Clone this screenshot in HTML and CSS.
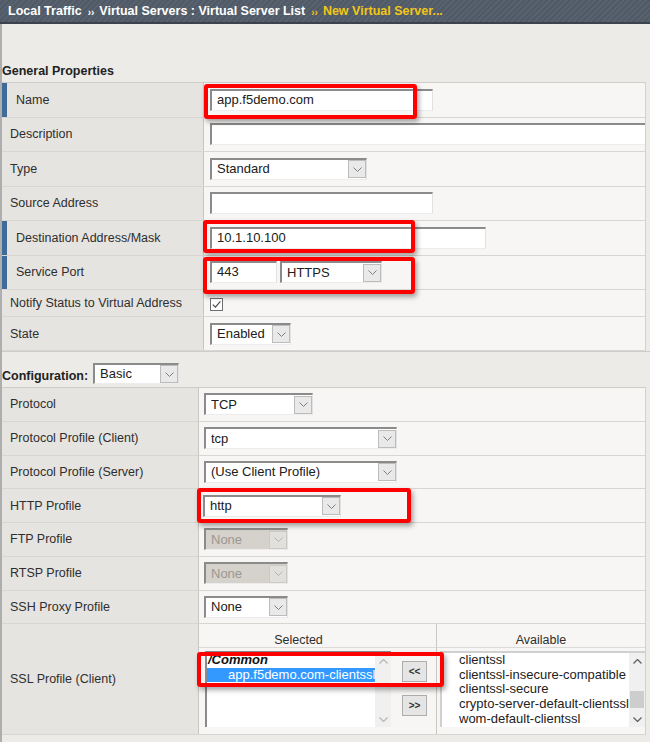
FILE: index.html
```html
<!DOCTYPE html>
<html lang="en">
<head>
    <meta charset="UTF-8">
    <title>New Virtual Server</title>
    <link rel="stylesheet" href="styles.css">
</head>
<body>
    <header class="crumbs">
        <span>Local Traffic</span>
        <span class="sep">››</span>
        <span>Virtual Servers : Virtual Server List</span>
        <span class="sep here">››</span>
        <span class="here">New Virtual Server...</span>
    </header>

    <main class="page">
        <h3 class="section-title">General Properties</h3>
        <div class="props general">
            <div class="row required">
                <div class="label">Name</div>
                <div class="value"><div class="text w-name">app.f5demo.com</div></div>
            </div>
            <div class="row">
                <div class="label">Description</div>
                <div class="value"><div class="text w-desc"></div></div>
            </div>
            <div class="row">
                <div class="label">Type</div>
                <div class="value">
                    <div class="select w-type"><span class="sel-text">Standard</span><span class="arrow"><svg class="chev" viewBox="0 0 9 5"><polyline points="0.5,0.5 4.5,4.5 8.5,0.5"/></svg></span></div>
                </div>
            </div>
            <div class="row">
                <div class="label">Source Address</div>
                <div class="value"><div class="text w-name"></div></div>
            </div>
            <div class="row required">
                <div class="label">Destination Address/Mask</div>
                <div class="value"><div class="text w-dest">10.1.10.100</div></div>
            </div>
            <div class="row required">
                <div class="label">Service Port</div>
                <div class="value port">
                    <div class="text w-port">443</div>
                    <div class="select w-https"><span class="sel-text">HTTPS</span><span class="arrow"><svg class="chev" viewBox="0 0 9 5"><polyline points="0.5,0.5 4.5,4.5 8.5,0.5"/></svg></span></div>
                </div>
            </div>
            <div class="row short">
                <div class="label">Notify Status to Virtual Address</div>
                <div class="value">
                    <span class="checkbox"><svg viewBox="0 0 11 11"><polyline points="1.8,5.6 4.4,8.2 9.4,2.4"/></svg></span>
                </div>
            </div>
            <div class="row state">
                <div class="label">State</div>
                <div class="value">
                    <div class="select w-state"><span class="sel-text">Enabled</span><span class="arrow"><svg class="chev" viewBox="0 0 9 5"><polyline points="0.5,0.5 4.5,4.5 8.5,0.5"/></svg></span></div>
                </div>
            </div>
        </div>

        <div class="config-head">
            <span class="config-title">Configuration:</span>
            <div class="select w-basic"><span class="sel-text">Basic</span><span class="arrow"><svg class="chev" viewBox="0 0 9 5"><polyline points="0.5,0.5 4.5,4.5 8.5,0.5"/></svg></span></div>
        </div>
        <div class="props config">
            <div class="row">
                <div class="label">Protocol</div>
                <div class="value">
                    <div class="select w-tcp"><span class="sel-text">TCP</span><span class="arrow"><svg class="chev" viewBox="0 0 9 5"><polyline points="0.5,0.5 4.5,4.5 8.5,0.5"/></svg></span></div>
                </div>
            </div>
            <div class="row">
                <div class="label">Protocol Profile (Client)</div>
                <div class="value">
                    <div class="select w-wide"><span class="sel-text">tcp</span><span class="arrow"><svg class="chev" viewBox="0 0 9 5"><polyline points="0.5,0.5 4.5,4.5 8.5,0.5"/></svg></span></div>
                </div>
            </div>
            <div class="row">
                <div class="label">Protocol Profile (Server)</div>
                <div class="value">
                    <div class="select w-wide"><span class="sel-text">(Use Client Profile)</span><span class="arrow"><svg class="chev" viewBox="0 0 9 5"><polyline points="0.5,0.5 4.5,4.5 8.5,0.5"/></svg></span></div>
                </div>
            </div>
            <div class="row">
                <div class="label">HTTP Profile</div>
                <div class="value">
                    <div class="select w-http"><span class="sel-text">http</span><span class="arrow"><svg class="chev" viewBox="0 0 9 5"><polyline points="0.5,0.5 4.5,4.5 8.5,0.5"/></svg></span></div>
                </div>
            </div>
            <div class="row">
                <div class="label">FTP Profile</div>
                <div class="value">
                    <div class="select w-none disabled"><span class="sel-text">None</span><span class="arrow"><svg class="chev" viewBox="0 0 9 5"><polyline points="0.5,0.5 4.5,4.5 8.5,0.5"/></svg></span></div>
                </div>
            </div>
            <div class="row">
                <div class="label">RTSP Profile</div>
                <div class="value">
                    <div class="select w-none disabled"><span class="sel-text">None</span><span class="arrow"><svg class="chev" viewBox="0 0 9 5"><polyline points="0.5,0.5 4.5,4.5 8.5,0.5"/></svg></span></div>
                </div>
            </div>
            <div class="row">
                <div class="label">SSH Proxy Profile</div>
                <div class="value">
                    <div class="select w-none"><span class="sel-text">None</span><span class="arrow"><svg class="chev" viewBox="0 0 9 5"><polyline points="0.5,0.5 4.5,4.5 8.5,0.5"/></svg></span></div>
                </div>
            </div>
            <div class="row ssl">
                <div class="label">SSL Profile (Client)</div>
                <div class="value swap">
                    <div class="swap-head">Selected</div>
                    <div class="swap-head"></div>
                    <div class="swap-head divided">Available</div>

                    <div class="swap-col">
                        <div class="listbox w-selected">
                            <div class="items">
                                <div class="group">/Common</div>
                                <div class="item picked">app.f5demo.com-clientssl</div>
                            </div>
                            <div class="scrollbar faint">
                                <span class="sb-btn"><svg viewBox="0 0 9 5"><polyline points="0.5,4.5 4.5,0.5 8.5,4.5"/></svg></span>
                                <span class="sb-track"></span>
                                <span class="sb-btn"><svg viewBox="0 0 9 5"><polyline points="0.5,0.5 4.5,4.5 8.5,0.5"/></svg></span>
                            </div>
                        </div>
                    </div>
                    <div class="swap-buttons">
                        <span class="mini-btn">&lt;&lt;</span>
                        <span class="mini-btn">&gt;&gt;</span>
                    </div>
                    <div class="swap-col divided">
                        <div class="listbox w-available">
                            <div class="items">
                                <div class="item">clientssl</div>
                                <div class="item">clientssl-insecure-compatible</div>
                                <div class="item">clientssl-secure</div>
                                <div class="item">crypto-server-default-clientssl</div>
                                <div class="item">wom-default-clientssl</div>
                            </div>
                            <div class="scrollbar">
                                <span class="sb-btn"><svg viewBox="0 0 9 5"><polyline points="0.5,4.5 4.5,0.5 8.5,4.5"/></svg></span>
                                <span class="sb-track"><span class="sb-thumb"></span></span>
                                <span class="sb-btn"><svg viewBox="0 0 9 5"><polyline points="0.5,0.5 4.5,4.5 8.5,0.5"/></svg></span>
                            </div>
                        </div>
                    </div>
                </div>
            </div>
        </div>
    </main>

    <!-- callout frames drawn over the form -->
    <div class="mark mark-name"></div>
    <div class="mark mark-dest"></div>
    <div class="mark mark-port"></div>
    <div class="mark mark-http"></div>
    <div class="mark mark-ssl"></div>
</body>
</html>
```

FILE: styles.css
```css
* {
    margin: 0;
    padding: 0;
    box-sizing: border-box;
}

body {
    position: relative;
    width: 650px;
    height: 742px;
    overflow: hidden;
    background: #ecebe7;
    font-family: 'Liberation Sans', Arial, sans-serif;
    font-size: 12.5px;
    color: #2e2e2e;
}

/* Breadcrumb bar */
.crumbs {
    height: 24px;
    display: flex;
    align-items: center;
    padding-left: 8px;
    background: repeating-linear-gradient(135deg, #58626e 0 2px, #505a66 2px 4px);
    border-bottom: 2px solid #3c434c;
    color: #fff;
    font-weight: bold;
    white-space: nowrap;
}

.crumbs .sep {
    font-size: 10px;
    margin: 2px 5px 0 6px;
}

.crumbs .here {
    color: #f2c618;
}

/* Page body */
.page {
    border-left: 2px solid #aeaeae;
    height: 718px;
}

.section-title {
    height: 58px;
    display: flex;
    align-items: flex-end;
    padding-bottom: 4px;
    font-size: 12.5px;
    font-weight: bold;
    color: #222;
}

.props {
    width: 644px;
    border-top: 1px solid #cfcdc9;
    border-right: 1px solid #d3d1cd;
}

.row {
    display: grid;
    border-bottom: 1px solid #d8d6d2;
}

.general .row {
    grid-template-columns: 202px 1fr;
    height: 34.5px;
}

.general .row.short {
    height: 27px;
}

.general .row.state {
    height: 34px;
}

.config .row {
    grid-template-columns: 197px 1fr;
    height: 33.75px;
}

.config .row.ssl {
    height: 111px;
}

.label {
    display: flex;
    align-items: center;
    padding-left: 8px;
    background: #e6e4e0;
    border-right: 1px solid #c9c7c3;
    white-space: nowrap;
}

.required .label {
    border-left: 5px solid #3e6b9a;
    padding-left: 9px;
}

.value {
    display: flex;
    align-items: center;
    padding-left: 6px;
    background: #f7f6f4;
    overflow: hidden;
}

.config .value {
    padding-left: 5px;
}

.value.port {
    gap: 3px;
}

/* Text boxes and drop-downs */
.text,
.select {
    flex-shrink: 0;
    height: 22px;
    background: #fff;
    border-top: 2px solid #8b8b8b;
    border-left: 2px solid #8b8b8b;
    border-right: 1px solid #e2e2e2;
    border-bottom: 1px solid #ececec;
    font-size: 13px;
    color: #202020;
    white-space: nowrap;
}

.text {
    line-height: 18px;
    padding-left: 5px;
}

.select {
    display: flex;
    align-items: center;
}

.sel-text {
    flex: 1;
    padding-left: 5px;
    line-height: 18px;
    overflow: hidden;
}

.arrow {
    width: 18px;
    height: 18px;
    display: flex;
    align-items: center;
    justify-content: center;
    background: #e9e9e9;
    border: 1px solid #bcbcbc;
}

.chev {
    width: 9px;
    height: 5px;
    fill: none;
    stroke: #7d7d7d;
    stroke-width: 1;
}

.select.disabled {
    background: #d5d1cb;
    color: #9b9893;
}

.select.disabled .arrow {
    background: #e2e0dc;
    border-color: #cbc9c5;
}

.select.disabled .chev {
    stroke: #b5b3af;
}

.w-name { width: 223px; }
.w-desc { width: 440px; }
.w-dest { width: 276px; }
.w-port { width: 67px; }
.w-https { width: 102px; }
.w-type { width: 157px; }
.w-state { width: 81px; }
.w-basic { width: 86px; height: 21px; }
.w-tcp { width: 109px; }
.w-wide { width: 193px; }
.w-http { width: 138px; margin-left: -1px; }
.w-none { width: 84px; }

.checkbox {
    width: 13px;
    height: 13px;
    margin-top: 2px;
    background: #fff;
    border: 1px solid #6e6e6e;
    display: flex;
}

.checkbox svg {
    width: 11px;
    height: 11px;
    fill: none;
    stroke: #4a4a4a;
    stroke-width: 1.2;
}

/* Configuration heading */
.config-head {
    height: 36px;
    display: flex;
    align-items: flex-end;
    gap: 5px;
    padding-bottom: 3px;
    border-top: 1px solid #cfcdc9;
}

.config-title {
    font-weight: bold;
    color: #222;
    line-height: 16px;
}

/* SSL profile chooser */
.value.swap {
    display: grid;
    grid-template-columns: 199px 38px 1fr;
    grid-template-rows: 24px 1fr;
    align-items: stretch;
    padding-left: 0;
}

.swap-head {
    display: flex;
    align-items: center;
    justify-content: center;
    padding-top: 8px;
    border-bottom: 1px solid #dddbd7;
}

.divided {
    border-left: 1px solid #c9c7c3;
}

.swap-col {
    padding-top: 3px;
}

.swap-col.divided {
    padding-left: 3px;
}

.listbox {
    display: flex;
    height: 76px;
    background: #fff;
    border-top: 2px solid #8b8b8b;
    border-left: 2px solid #8b8b8b;
    font-size: 13px;
    line-height: 14.6px;
    overflow: hidden;
}

.w-selected {
    width: 186px;
    margin-left: 6px;
}

.w-available {
    width: 205px;
    border-top-color: #d0d0d0;
    border-left-color: #d0d0d0;
}

.items {
    flex: 1;
    overflow: hidden;
    white-space: nowrap;
}

.group {
    font-weight: bold;
    font-style: italic;
    padding-left: 1px;
    color: #111;
}

.item {
    color: #222;
}

.item.picked {
    background: #3399ff;
    color: #fff;
    margin-left: -2px;
    padding-left: 23px;
}

.w-available .items {
    padding-left: 17px;
}

.scrollbar {
    width: 16px;
    display: flex;
    flex-direction: column;
    background: #f0f0f0;
}

.sb-btn {
    height: 16px;
    display: flex;
    align-items: center;
    justify-content: center;
}

.sb-btn svg {
    width: 9px;
    height: 5px;
    fill: none;
    stroke: #606060;
    stroke-width: 1.3;
}

.scrollbar.faint .sb-btn svg {
    stroke: #b8b8b8;
}

.sb-track {
    flex: 1;
}

.sb-thumb {
    display: block;
    height: 17px;
    margin: 22px 1px 0;
    background: #cdcdcd;
}

.swap-buttons {
    display: flex;
    flex-direction: column;
    gap: 13px;
    padding: 13px 0 0 4px;
}

.mini-btn {
    width: 25px;
    height: 21px;
    display: flex;
    align-items: center;
    justify-content: center;
    background: #e5e5e5;
    border: 1px solid #adadad;
    font-size: 10px;
    font-weight: bold;
    color: #333;
}

/* Red callout frames */
.mark {
    position: absolute;
    border: 4px solid #ff0000;
    border-radius: 3px;
    box-shadow: 2px 3px 5px rgba(0, 0, 0, 0.35);
}

.mark-name { left: 204px; top: 84px; width: 213px; height: 35px; }
.mark-dest { left: 203px; top: 220px; width: 212px; height: 33px; }
.mark-port { left: 203px; top: 257px; width: 212px; height: 37px; }
.mark-http { left: 197px; top: 488px; width: 214px; height: 35px; }
.mark-ssl { left: 197px; top: 652px; width: 247px; height: 35px; }
```
